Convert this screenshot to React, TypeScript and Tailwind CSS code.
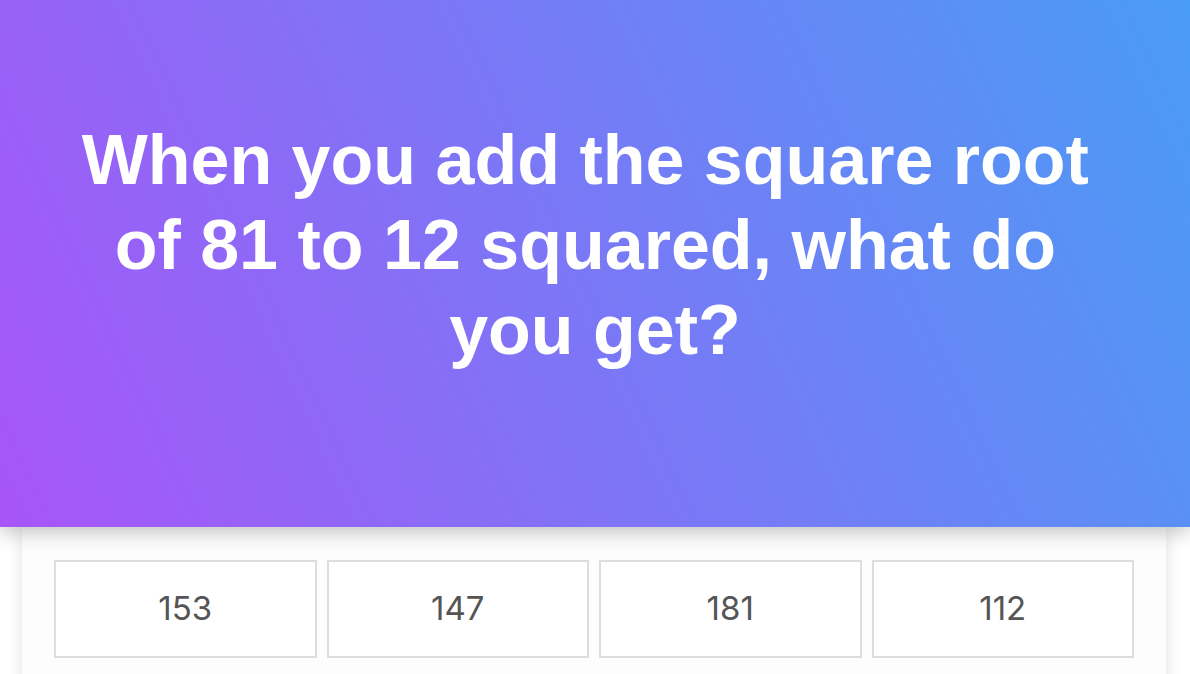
const ANSWERS = ["153", "147", "181", "112"];

export default function App() {
  return (
    <div className="min-h-screen bg-white">
      <header className="relative z-10 bg-[linear-gradient(65deg,#a855f7,#4a9cf5)] shadow-[0_6px_18px_rgba(0,0,0,0.22)] h-[527px] pt-[118px]">
        <h1 className="mx-auto w-[1040px] whitespace-break-spaces text-center text-white font-bold text-[70px] leading-[85px] [font-family:'Liberation_Sans',Arial,sans-serif]">
          When you add the square root of 81 to 12 squared, what do you get?
        </h1>
      </header>
      <main className="ml-[22px] mr-[24px] bg-[#fdfdfd] shadow-[0_0_14px_rgba(0,0,0,0.12)] px-8 pt-[33px] pb-10">
        <div className="grid grid-cols-4 gap-[10px]">
          {ANSWERS.map((a) => (
            <button
              key={a}
              className="h-[98px] border-2 border-[#dddddd] bg-white text-[#555555] text-[33px] font-normal [font-family:Inter,'Noto_Sans',sans-serif]"
            >
              {a}
            </button>
          ))}
        </div>
      </main>
    </div>
  );
}
